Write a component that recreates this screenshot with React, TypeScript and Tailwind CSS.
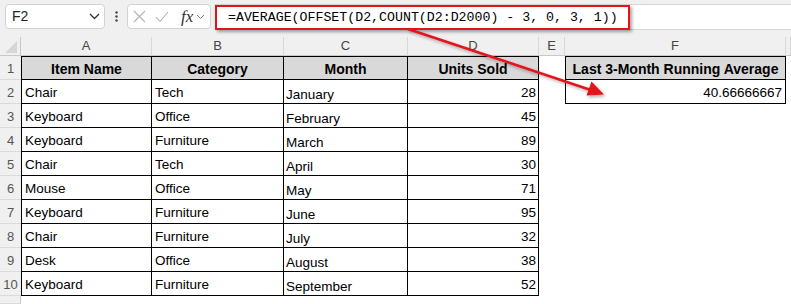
import React from "react";

const rows: [string, string, string, number][] = [
  ["Chair", "Tech", "January", 28],
  ["Keyboard", "Office", "February", 45],
  ["Keyboard", "Furniture", "March", 89],
  ["Chair", "Tech", "April", 30],
  ["Mouse", "Office", "May", 71],
  ["Keyboard", "Furniture", "June", 95],
  ["Chair", "Furniture", "July", 32],
  ["Desk", "Office", "August", 38],
  ["Keyboard", "Furniture", "September", 52],
];

const colLetters = ["A", "B", "C", "D", "E", "F", ""];

function RowNum({ n, last }: { n: string; last?: boolean }) {
  return (
    <div
      className={
        "flex items-end justify-center pb-[1px] bg-[#f0f0f0] text-[13px] text-[#555] border-b border-[#dadada] " +
        (last ? "border-r border-r-[#c8c8c8]" : "")
      }
    >
      {n}
    </div>
  );
}

export default function App() {
  return (
    <div className="w-[791px] h-[304px] relative overflow-hidden bg-white font-['Liberation_Sans',Arial,sans-serif] text-black">
      {/* Toolbar */}
      <div className="h-[37px] bg-[#f0f0f0] flex items-start pt-[4px] pl-[5px]">
        <div className="w-[100px] h-[25px] bg-white border border-[#d2d2d2] rounded-[4px] flex items-center justify-between pl-[6px] pr-[4px]">
          <span className="text-[14px] text-[#222]">F2</span>
          <svg width="11" height="7" viewBox="0 0 11 7">
            <path d="M1 1 L5.5 5.5 L10 1" fill="none" stroke="#333" strokeWidth="1.3" />
          </svg>
        </div>
        <div className="w-[22px] h-[25px] flex items-center justify-center">
          <svg width="3" height="11" viewBox="0 0 3 11">
            <circle cx="1.5" cy="1.5" r="1.2" fill="#444" />
            <circle cx="1.5" cy="5.5" r="1.2" fill="#444" />
            <circle cx="1.5" cy="9.5" r="1.2" fill="#444" />
          </svg>
        </div>
        <div className="w-[84px] h-[25px] bg-white border border-[#d2d2d2] rounded-[4px] flex items-center pl-[5px] gap-[9px]">
          <svg width="13" height="13" viewBox="0 0 13 13">
            <path d="M1 1 L12 12 M12 1 L1 12" stroke="#b4b4b4" strokeWidth="1.1" fill="none" />
          </svg>
          <svg width="14" height="12" viewBox="0 0 14 12">
            <path d="M1 6 L5 10.5 L13 1" stroke="#b4b4b4" strokeWidth="1.1" fill="none" />
          </svg>
          <div className="flex items-center gap-[3px] ml-[3px]">
            <span className="font-['Liberation_Serif',serif] italic text-[17px] leading-none text-[#333]">fx</span>
            <svg width="9" height="6" viewBox="0 0 9 6">
              <path d="M1 1 L4.5 4.5 L8 1" fill="none" stroke="#777" strokeWidth="1" />
            </svg>
          </div>
        </div>
        <div className="flex-1 ml-[4px] h-[26px] bg-white border-y border-[#d6d6d6]">
          <div className="w-[415px] h-[25px] border-2 border-[#e3131b] shadow-[2px_2px_3px_rgba(0,0,0,0.35)] flex items-center pl-[11px] font-['Liberation_Mono',monospace] text-[13.25px] text-black">
            =AVERAGE(OFFSET(D2,COUNT(D2:D2000) - 3, 0, 3, 1))
          </div>
        </div>
      </div>

      {/* Grid */}
      <div className="grid grid-cols-[21px_131px_132px_124px_131px_26px_221px_1fr] grid-rows-[19px_24px_24px_24px_24px_24px_24px_24px_24px_24px_24px_8px]">
        {/* column header strip */}
        <div className="bg-[#f0f0f0] border-r border-b border-[#c8c8c8] relative">
          <svg className="absolute left-[5px] top-[4px]" width="12" height="12" viewBox="0 0 12 12">
            <path d="M12 0 L12 12 L0 12 Z" fill="#d6d6d6" />
          </svg>
        </div>
        {colLetters.map((c, i) => (
          <div
            key={"h" + i}
            className="bg-[#f0f0f0] border-r border-b border-r-[#d8d8d8] border-b-[#c8c8c8] flex items-center justify-center text-[13px] text-[#444]"
          >
            {c}
          </div>
        ))}

        {/* Row 1 */}
        <RowNum n="1" />
        {["Item Name", "Category", "Month", "Units Sold"].map((h, i) => (
          <div
            key={"r1" + i}
            className={
              "bg-[#d9d9d9] border-t border-r border-b border-black flex items-end justify-center pb-[2px] font-bold text-[14px] leading-[16px] " +
              (i === 0 ? "border-l" : "")
            }
          >
            {h}
          </div>
        ))}
        <div className="bg-white" />
        <div className="bg-[#d9d9d9] border border-black flex items-end justify-center pb-[2px] font-bold text-[14px] leading-[16px]">
          Last 3-Month Running Average
        </div>
        <div />

        {rows.map((r, idx) => (
          <React.Fragment key={"row" + idx}>
            <RowNum n={String(idx + 2)} />
            <div className="border-l border-r border-b border-black flex items-end pl-[3px] pb-[2px] text-[13.5px] leading-[16px]">
              {r[0]}
            </div>
            <div className="border-r border-b border-black flex items-end pl-[3px] pb-[2px] text-[13.5px] leading-[16px]">
              {r[1]}
            </div>
            <div className="border-r border-b border-black flex items-end pl-[2px] pb-0 text-[13.5px] leading-[16px]">
              {r[2]}
            </div>
            <div className="border-r border-b border-black flex items-end justify-end pr-[2px] pb-[2px] text-[13.5px] leading-[16px]">
              {r[3]}
            </div>
            <div />
            {idx === 0 ? (
              <div className="border-l border-r border-b border-black flex items-end justify-end pr-[3px] pb-[2px] text-[13.5px] leading-[16px]">
                40.66666667
              </div>
            ) : (
              <div />
            )}
            <div />
          </React.Fragment>
        ))}

        {/* Row 11 partial */}
        <RowNum n="" last />
        <div />
        <div />
        <div />
        <div />
        <div />
        <div />
        <div />
      </div>

      {/* Annotation arrow */}
      <svg className="absolute left-0 top-0 pointer-events-none" width="791" height="304" viewBox="0 0 791 304">
        <defs>
          <filter id="sh" x="-10%" y="-10%" width="130%" height="140%">
            <feDropShadow dx="1.5" dy="2" stdDeviation="1.5" floodColor="#000" floodOpacity="0.3" />
          </filter>
        </defs>
        <g filter="url(#sh)">
          <line x1="408" y1="29" x2="590" y2="89.7" stroke="#e3131b" strokeWidth="2.6" />
          <path d="M604 94.5 L586.5 95.5 L591.5 81.5 Z" fill="#e3131b" />
        </g>
      </svg>
    </div>
  );
}
